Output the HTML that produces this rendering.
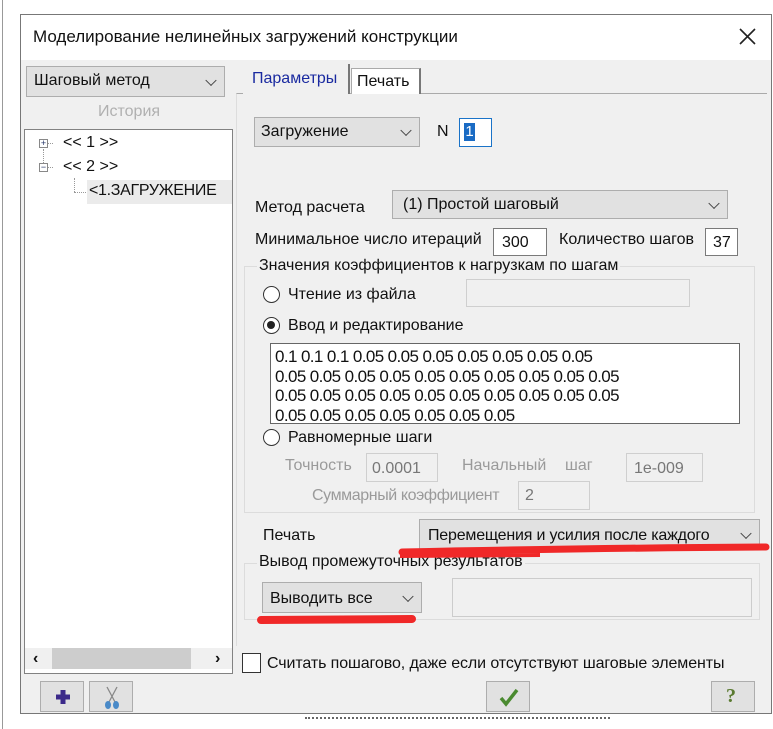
<!DOCTYPE html>
<html><head><meta charset="utf-8"><style>
*{box-sizing:border-box;margin:0;padding:0}
body{width:773px;height:729px;background:#fff;position:relative;overflow:hidden;font-family:"Liberation Sans","DejaVu Sans",sans-serif;font-size:16px;color:#111}
.a{position:absolute}
.t{position:absolute;white-space:nowrap;line-height:18px}
.cb{position:absolute;background:#e1e1e1;border:1px solid #adadad}
.cb .v{position:absolute;right:9px;top:50%;width:8px;height:8px;border-right:1.3px solid #444;border-bottom:1.3px solid #444;transform:translateY(-70%) rotate(45deg)}
.in{position:absolute;background:#fff;border:1px solid #7a7a7a}
.dis{position:absolute;background:#f0f0f0;border:1px solid #cfcfcf}
.g{color:#9a9a9a}
.rad{position:absolute;width:17px;height:17px;border-radius:50%;border:1.5px solid #333;background:#fff}
.grp{position:absolute;border:1px solid #dcdcdc}
.btn{position:absolute;background:#e1e1e1;border:1px solid #adadad}
</style></head><body>
<div class="a" style="left:2px;top:0;width:1px;height:729px;background:#999"></div>
<div class="a" style="left:20px;top:14px;width:752px;height:700px;border:1px solid #777;background:#f0f0f0"></div>
<div class="a" style="left:21px;top:15px;width:750px;height:45px;background:#fff"></div>
<div class="t" style="left:33px;top:28px;font-size:17px">Моделирование нелинейных загружений конструкции</div>
<svg class="a" style="left:739px;top:28px" width="17" height="17"><path d="M1 1L16 16M16 1L1 16" stroke="#222" stroke-width="1.6"/></svg>

<div class="cb" style="left:26px;top:66px;width:199px;height:31px"><div class="t" style="left:7px;top:5px">Шаговый метод</div><div class="v"></div></div>
<div class="t g" style="left:98px;top:103px;color:#b0b0b0">История</div>
<div class="a" style="left:24px;top:129px;width:209px;height:545px;background:#fff;border:1px solid #828282"></div>
<div class="a" style="left:39px;top:139px;width:9px;height:9px;border:1px solid #888;font-size:9px;line-height:7px;text-align:center;color:#236">+</div>
<div class="a" style="left:39px;top:163px;width:9px;height:9px;border:1px solid #888;font-size:9px;line-height:7px;text-align:center;color:#236">−</div>
<div class="a" style="left:43px;top:149px;height:14px;border-left:1px dotted #999"></div>
<div class="a" style="left:48px;top:143px;width:5px;border-top:1px dotted #999"></div>
<div class="a" style="left:48px;top:167px;width:5px;border-top:1px dotted #999"></div>
<div class="a" style="left:74px;top:178px;height:14px;border-left:1px dotted #999"></div>
<div class="a" style="left:74px;top:192px;width:12px;border-top:1px dotted #999"></div>
<div class="t" style="left:63px;top:134px;font-size:16px">&lt;&lt; 1 &gt;&gt;</div>
<div class="t" style="left:63px;top:158px;font-size:16px">&lt;&lt; 2 &gt;&gt;</div>
<div class="a" style="left:87px;top:180px;width:145px;height:24px;background:#ebebeb"></div>
<div class="t" style="left:89px;top:182px;font-size:16px;letter-spacing:-0.3px">&lt;1.ЗАГРУЖЕНИЕ</div>
<div class="a" style="left:25px;top:648px;width:207px;height:21px;background:#f0f0f0"></div>
<div class="a" style="left:52px;top:648px;width:139px;height:21px;background:#cdcdcd"></div>
<div class="t" style="left:33px;top:650px;font-weight:bold">‹</div>
<div class="t" style="left:215px;top:650px;font-weight:bold">›</div>
<div class="btn" style="left:40px;top:681px;width:44px;height:31px"><svg class="a" style="left:13px;top:6px" width="18" height="18"><path d="M9 2V16M2 9H16" stroke="#3c2a8a" stroke-width="5"/></svg></div>
<div class="btn" style="left:89px;top:681px;width:44px;height:31px"><svg class="a" style="left:11px;top:4px" width="22" height="24"><path d="M6 1L14 16M16 1L8 16" stroke="#888" stroke-width="1.3"/><ellipse cx="7" cy="19" rx="3" ry="4" fill="#4a8ac8"/><ellipse cx="15" cy="19" rx="3" ry="4" fill="#4a8ac8"/></svg></div>

<div class="a" style="left:236px;top:93px;width:531px;height:553px;border-top:1px solid #aaa;border-left:1px solid #ddd;background:#f0f0f0"></div>
<div class="a" style="left:243px;top:64px;width:107px;height:30px;background:#f0f0f0;border-right:2px solid #777"></div>
<div class="t" style="left:252px;top:70px;color:#1a2aa0">Параметры</div>
<div class="a" style="left:351px;top:68px;width:70px;height:26px;background:#fff;border:1px solid #aaa;border-right:2px solid #777;border-bottom:none"></div>
<div class="t" style="left:357px;top:73px">Печать</div>

<div class="cb" style="left:254px;top:117px;width:166px;height:30px"><div class="t" style="left:6px;top:5px">Загружение</div><div class="v"></div></div>
<div class="t" style="left:437px;top:123px">N</div>
<div class="a" style="left:459px;top:118px;width:33px;height:29px;background:#fff;border:1.5px solid #1a73c8"></div>
<div class="a" style="left:464px;top:123px;width:11px;height:18px;background:#1a6bc4;color:#fff;font-size:15px;line-height:18px;text-align:center">1</div>

<div class="t" style="left:255px;top:199px">Метод расчета</div>
<div class="cb" style="left:392px;top:190px;width:336px;height:29px"><div class="t" style="left:10px;top:5px">(1) Простой шаговый</div><div class="v"></div></div>
<div class="t" style="left:255px;top:231px">Минимальное число итераций</div>
<div class="in" style="left:493px;top:228px;width:54px;height:28px"><div class="t" style="left:8px;top:5px">300</div></div>
<div class="t" style="left:559px;top:231px">Количество шагов</div>
<div class="in" style="left:705px;top:228px;width:33px;height:28px"><div class="t" style="left:7px;top:5px">37</div></div>

<div class="grp" style="left:244px;top:266px;width:511px;height:247px"></div>
<div class="t" style="left:257px;top:257px;background:#f0f0f0;padding:0 2px">Значения коэффициентов к нагрузкам по шагам</div>
<div class="rad" style="left:263px;top:286px"></div>
<div class="t" style="left:288px;top:286px">Чтение из файла</div>
<div class="dis" style="left:466px;top:279px;width:224px;height:28px"></div>
<div class="rad" style="left:263px;top:317px"><div class="a" style="left:3px;top:3px;width:8px;height:8px;border-radius:50%;background:#222"></div></div>
<div class="t" style="left:288px;top:317px">Ввод и редактирование</div>
<div class="a" style="left:270px;top:343px;width:470px;height:81px;background:#fff;border:1px solid #666;overflow:hidden;font-size:17px;line-height:19.5px;padding:3px 0 0 4px;letter-spacing:-0.6px">0.1 0.1 0.1 0.05 0.05 0.05 0.05 0.05 0.05 0.05<br>0.05 0.05 0.05 0.05 0.05 0.05 0.05 0.05 0.05 0.05<br>0.05 0.05 0.05 0.05 0.05 0.05 0.05 0.05 0.05 0.05<br>0.05 0.05 0.05 0.05 0.05 0.05 0.05</div>
<div class="rad" style="left:263px;top:429px"></div>
<div class="t" style="left:288px;top:429px">Равномерные шаги</div>
<div class="t g" style="left:285px;top:457px">Точность</div>
<div class="dis" style="left:366px;top:453px;width:72px;height:29px"><div class="t g" style="left:5px;top:6px;color:#777">0.0001</div></div>
<div class="t g" style="left:462px;top:457px">Начальный</div>
<div class="t g" style="left:565px;top:457px">шаг</div>
<div class="dis" style="left:626px;top:453px;width:77px;height:29px"><div class="t g" style="left:7px;top:6px;color:#777">1e-009</div></div>
<div class="t g" style="left:312px;top:487px;letter-spacing:-0.4px">Суммарный коэффициент</div>
<div class="dis" style="left:518px;top:481px;width:72px;height:29px"><div class="t g" style="left:6px;top:5px;color:#777">2</div></div>

<div class="t" style="left:263px;top:527px">Печать</div>
<div class="cb" style="left:419px;top:519px;width:341px;height:31px"><div class="t" style="left:8px;top:7px;letter-spacing:-0.2px">Перемещения и усилия после каждого</div><div class="v"></div></div>
<div class="grp" style="left:244px;top:563px;width:516px;height:57px"></div>
<div class="t" style="left:257px;top:553px;background:#f0f0f0;padding:0 2px">Вывод промежуточных результатов</div>
<div class="cb" style="left:262px;top:582px;width:160px;height:31px"><div class="t" style="left:7px;top:7px">Выводить все</div><div class="v"></div></div>
<div class="dis" style="left:452px;top:578px;width:300px;height:39px;border-color:#ccc"></div>
<svg class="a" style="left:0;top:0" width="773" height="729"><path d="M402 552 Q600 548 766 547" stroke="#f02828" stroke-width="7" fill="none" stroke-linecap="round"/><path d="M400 556 L540 555" stroke="#f02828" stroke-width="4" fill="none"/><path d="M261 620 L412 619" stroke="#f02828" stroke-width="8" fill="none" stroke-linecap="round"/></svg>

<div class="a" style="left:242px;top:653px;width:19px;height:20px;border:1.5px solid #333;background:#fff"></div>
<div class="t" style="left:267px;top:655px;letter-spacing:-0.1px">Считать пошагово, даже если отсутствуют шаговые элементы</div>
<div class="btn" style="left:486px;top:681px;width:44px;height:31px"><svg class="a" style="left:12px;top:5px" width="20" height="20"><path d="M2 11L7 17L18 3" stroke="#4a8a30" stroke-width="3.5" fill="none"/></svg></div>
<div class="btn" style="left:711px;top:681px;width:44px;height:31px"><div class="t" style="left:14px;top:5px;font-size:20px;font-weight:bold;color:#5a7a30;font-family:'Liberation Serif',serif">?</div></div>
<div class="a" style="left:305px;top:717px;width:305px;border-top:2px dotted #666"></div>
</body></html>
